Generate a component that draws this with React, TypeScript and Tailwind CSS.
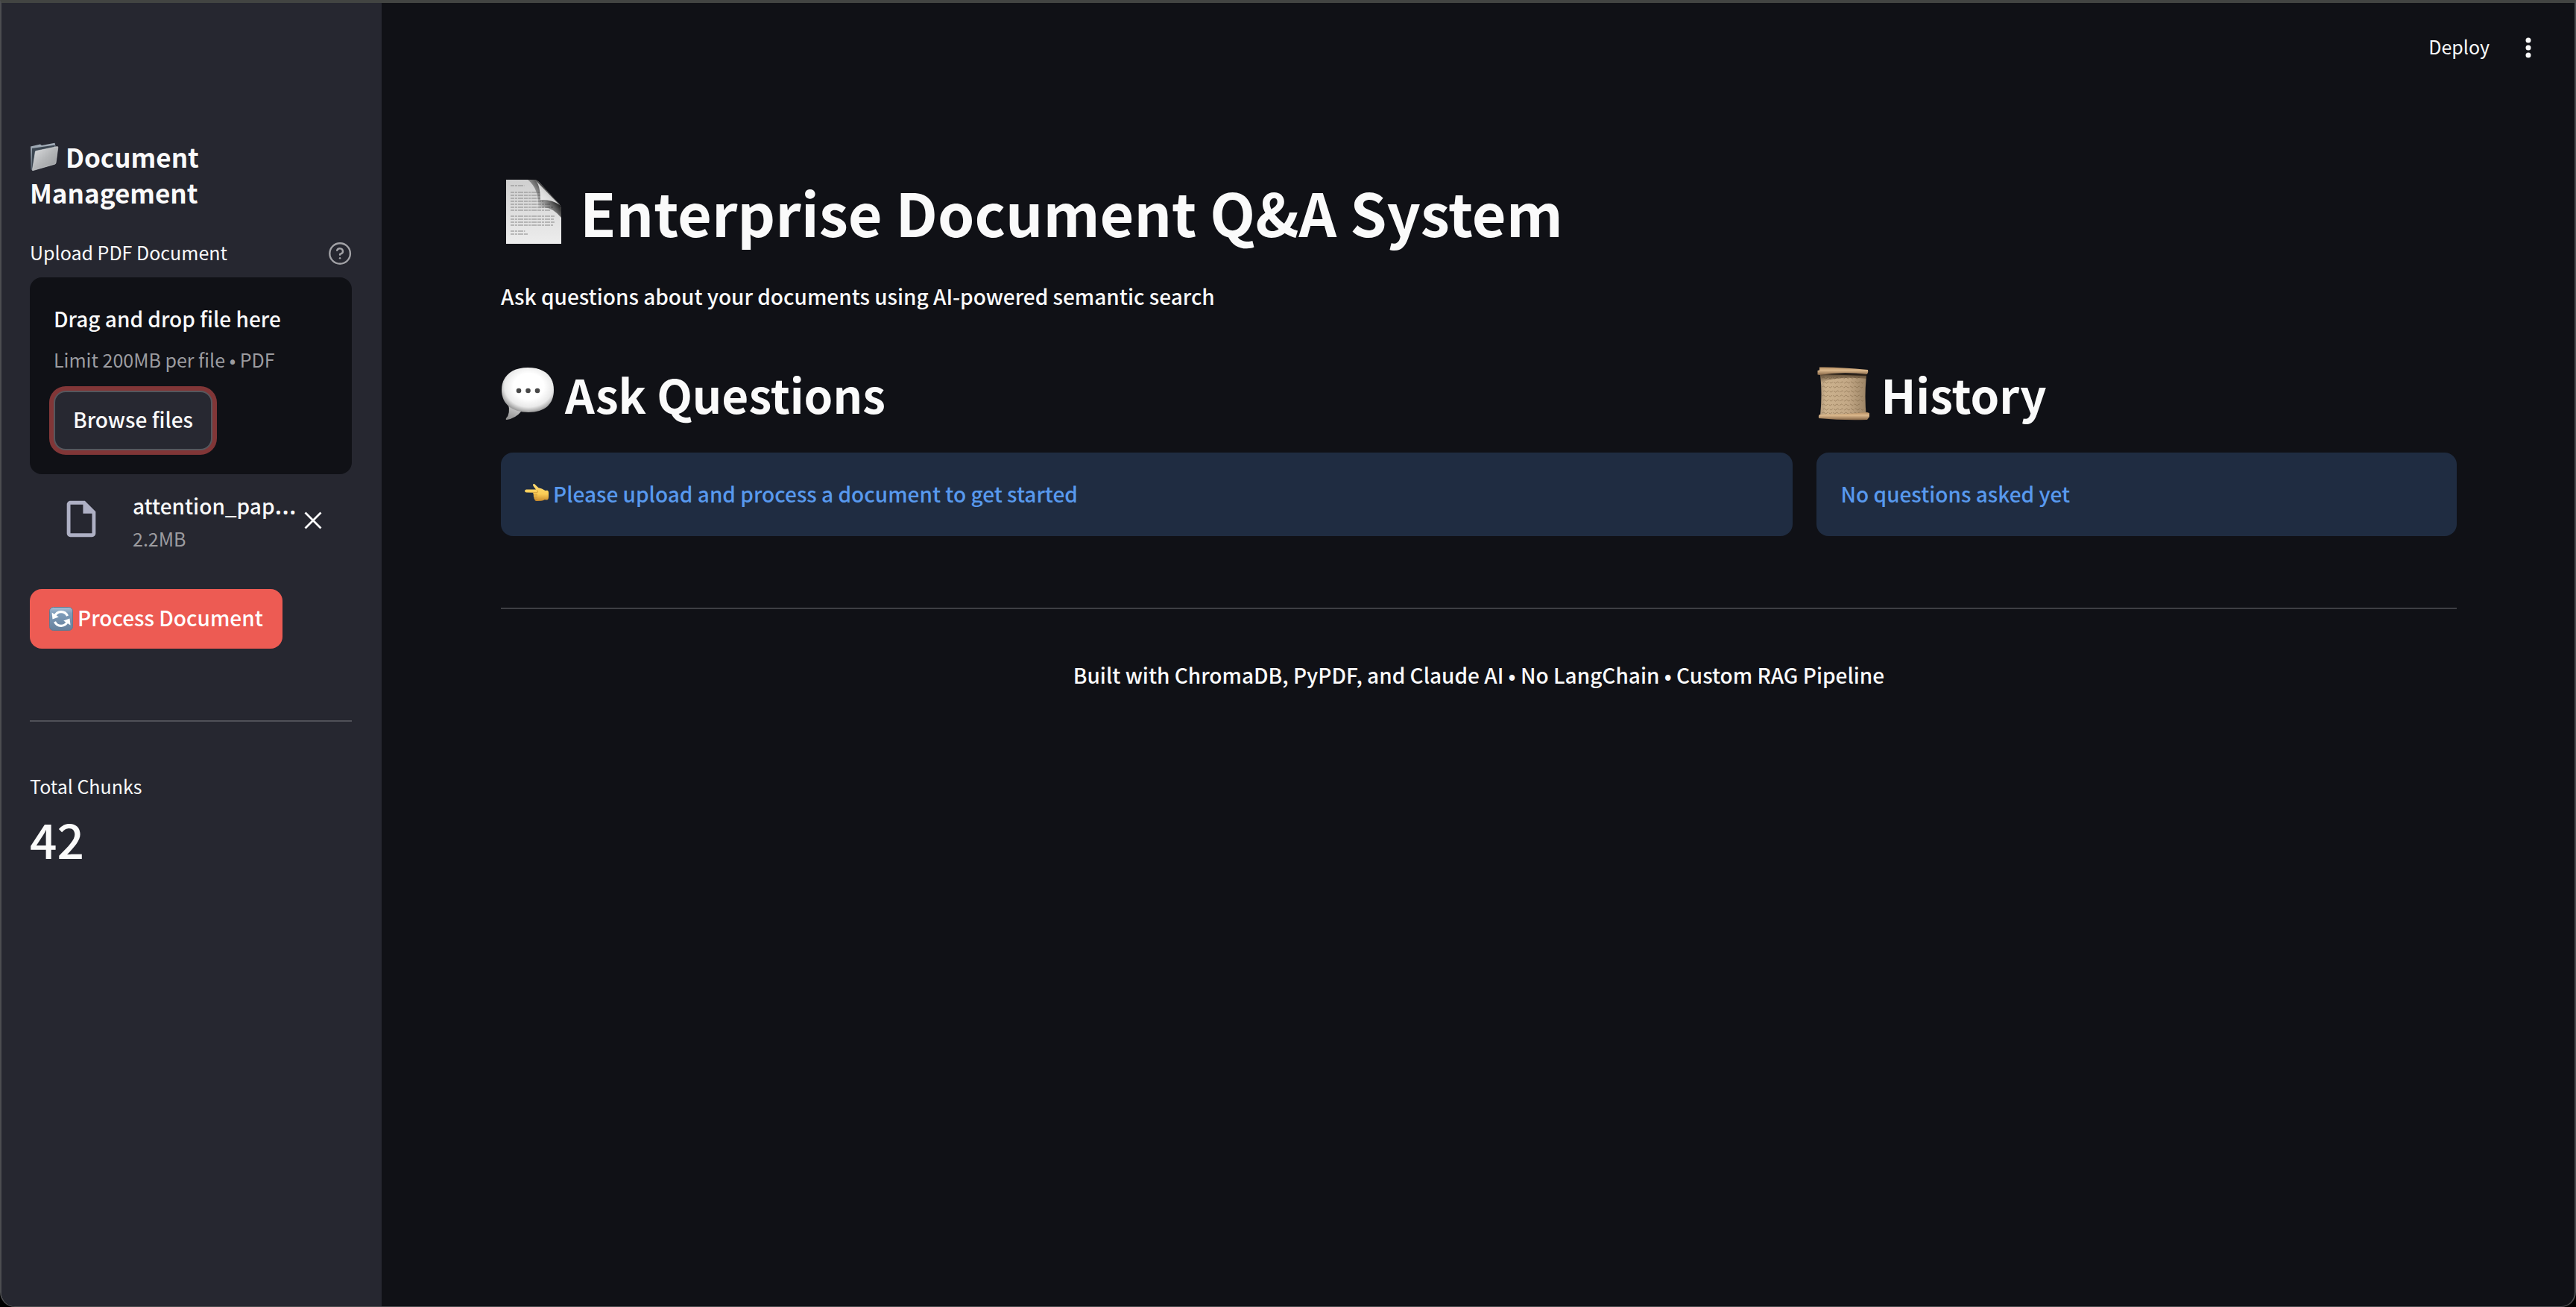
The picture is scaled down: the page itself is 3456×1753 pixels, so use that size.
import type { ReactNode } from 'react';

function FolderIcon() {
  return (
    <svg className="inline-block size-10 align-[-6px]" viewBox="0 0 40 40" aria-hidden="true">
      <defs>
        <linearGradient id="folderFront" x1="0" y1="0" x2="1" y2="1">
          <stop offset="0" stopColor="#e0e1e3" />
          <stop offset="0.5" stopColor="#b4b6b8" />
          <stop offset="1" stopColor="#95979a" />
        </linearGradient>
        <linearGradient id="folderBack" x1="0" y1="0" x2="0" y2="1">
          <stop offset="0" stopColor="#a9b3be" />
          <stop offset="1" stopColor="#525e6a" />
        </linearGradient>
      </defs>
      <path d="M1 5.500 L14 2.500 L16 4 L33.500 0.800 L34.500 5 L30 30 L3.500 38 L1.500 36 Z" fill="url(#folderBack)" />
      <path d="M3 8 L34 3.500 L33 7 L7 11.500 L4 37 L3 36 Z" fill="#3d4752" />
      <path d="M7.500 12.500 Q7.600 11.600 8.600 11.400 L36.500 5.600 Q38 5.400 37.800 7 L35 27.600 Q34.800 28.800 33.600 29.200 L4.600 37.600 Q3.200 38 3.400 36.600 Z" fill="url(#folderFront)" stroke="#d6d8da" strokeWidth="0.600" />
    </svg>
  );
}

const letterLines = [
  [10, 20], [19, 45], [23, 45], [27, 46], [31, 48], [35, 58], [39, 62], [43, 58],
  [51, 64], [55, 63], [59, 64], [63, 62], [71, 21], [75, 26],
];

function PageIcon() {
  return (
    <svg className="size-[88px] shrink-0" viewBox="0 0 88 88" aria-hidden="true">
      <defs>
        <linearGradient id="pageBody" x1="0" y1="0" x2="0" y2="1">
          <stop offset="0" stopColor="#cfcfcf" />
          <stop offset="0.5" stopColor="#dedede" />
          <stop offset="1" stopColor="#ededed" />
        </linearGradient>
        <linearGradient id="pageShade" x1="1" y1="0" x2="0" y2="0.8">
          <stop offset="0.35" stopColor="#000" stopOpacity="0.85" />
          <stop offset="0.62" stopColor="#222" stopOpacity="0.35" />
          <stop offset="0.8" stopColor="#222" stopOpacity="0" />
        </linearGradient>
        <linearGradient id="pageCurl" x1="0" y1="1" x2="0.7" y2="0.3">
          <stop offset="0" stopColor="#f6f6f6" />
          <stop offset="0.6" stopColor="#dcdcdc" />
          <stop offset="1" stopColor="#a8a8a8" />
        </linearGradient>
      </defs>
      <path d="M7 1 H44 Q49 1 53 6 L75 30 Q81 35 81 42 V87 H7 Z" fill="url(#pageBody)" />
      {letterLines.map(([y, w]) => (
        <line key={y} x1="13" x2={13 + w * 0.92} y1={y - 1} y2={y - 1} stroke="#8a8a8a" strokeOpacity="0.7" strokeWidth="1.400" strokeDasharray="5 1 3 1 7 1" />
      ))}
      <path d="M36 1 H44 Q49 1 53 6 L75 30 Q81 35 81 42 V52 Q66 34 50 40 Q52 14 36 1 Z" fill="url(#pageShade)" />
      <path d="M46 1.500 Q53 8 53 28 Q68 27 79 35 Z" fill="url(#pageCurl)" />
    </svg>
  );
}

function BubbleIcon() {
  return (
    <svg className="size-[72px] shrink-0" viewBox="0 0 72 72" aria-hidden="true">
      <defs>
        <radialGradient id="bubbleFill" cx="0.52" cy="0.42" r="0.58">
          <stop offset="0.5" stopColor="#ffffff" />
          <stop offset="0.8" stopColor="#e9e9e9" />
          <stop offset="1" stopColor="#9b9b9b" />
        </radialGradient>
        <linearGradient id="bubbleTail" x1="0.6" y1="0" x2="0.2" y2="1">
          <stop offset="0" stopColor="#d5d5d5" />
          <stop offset="1" stopColor="#8e8e8e" />
        </linearGradient>
      </defs>
      <path d="M10 50 Q13 63 7 69 Q6 71 8 71 Q20 69 28 59 Z" fill="url(#bubbleTail)" />
      <path d="M36 1 C58 1 71 12 71 31 C71 50 59 61 37 61 C15 61 1 50 1 31 C1 13 14 1 36 1 Z" fill="url(#bubbleFill)" />
      <circle cx="24" cy="32" r="3.300" fill="#484848" />
      <circle cx="36.500" cy="32" r="3.300" fill="#484848" />
      <circle cx="49" cy="32" r="3.300" fill="#484848" />
    </svg>
  );
}

function ScrollIcon() {
  return (
    <svg className="size-[72px] shrink-0" viewBox="0 0 72 72" aria-hidden="true">
      <defs>
        <linearGradient id="scrollSheet" x1="0" y1="0" x2="1" y2="0">
          <stop offset="0" stopColor="#b0987a" />
          <stop offset="0.12" stopColor="#ccb28e" />
          <stop offset="0.6" stopColor="#c3a886" />
          <stop offset="1" stopColor="#9c8465" />
        </linearGradient>
        <linearGradient id="scrollRoll" x1="0" y1="0" x2="0" y2="1">
          <stop offset="0" stopColor="#b58d61" />
          <stop offset="0.4" stopColor="#dcb98d" />
          <stop offset="1" stopColor="#866647" />
        </linearGradient>
        <linearGradient id="scrollShade" x1="0" y1="0" x2="0" y2="1">
          <stop offset="0" stopColor="#3d2c1a" stopOpacity="0.8" />
          <stop offset="1" stopColor="#3d2c1a" stopOpacity="0" />
        </linearGradient>
      </defs>
      <path d="M5 10 Q8 36 5 66 L67 68 Q64 40 67 12 Z" fill="url(#scrollSheet)" />
      {[15, 21, 27, 33, 39, 45, 51, 57, 62].map((y, i) => (
        <path key={y} d={`M${8 + (i % 2)} ${y} q1.500 -2 3 0 t3 0 t3 0 t3 0 t3 0 t3 0 t3 0 t3 0 t3 0 t3 0 t3 0 t3 0 t3 0 t3 0 t3 0 t3 0 t3 0 ${i % 3 ? 't3 0' : ''}`} fill="none" stroke="#6f5638" strokeOpacity="0.5" strokeWidth="0.900" strokeDasharray="9 1.500 5 1.500" />
      ))}
      <path d="M5 9 L67 10 L67 16 Q30 12 6 21 Z" fill="url(#scrollShade)" />
      <path d="M4 0.500 Q30 0 69 4 Q70 7 68 10 Q34 6 4 11 L1.500 10.500 L1.500 5 L4 4.500 Z" fill="url(#scrollRoll)" />
      <path d="M4 64 Q38 64 68 61 L71 62 L71 67 L68 71 Q34 72 3 69 Q2 66 4 64 Z" fill="url(#scrollRoll)" />
    </svg>
  );
}

function HandIcon() {
  return (
    <svg className="size-8 shrink-0" viewBox="0 0 32 32" aria-hidden="true">
      <defs>
        <linearGradient id="handFill" x1="0" y1="0" x2="0" y2="1">
          <stop offset="0" stopColor="#ffdc72" />
          <stop offset="0.6" stopColor="#f9cb55" />
          <stop offset="1" stopColor="#c98a2c" />
        </linearGradient>
      </defs>
      <path d="M2 10.500 Q0 11 0 12.800 Q0.300 14.600 2.200 14.600 L11.500 14.800 Q10.800 16.500 12 17.800 Q11.200 19.400 12.400 20.700 Q11.900 22.400 13.200 23.300 Q13.200 26 16 26 L22 25.800 Q25 25.600 26.500 24.200 L30 24.600 Q32 24 32 20 V15 Q32 12 30 11.800 L27.500 12 Q23 9 18.500 8.200 Q15.500 5.500 13.200 3.200 Q11.500 2.500 11 4 Q10.800 5.500 13 8 L15 10.500 Z" fill="url(#handFill)" />
      <path d="M11.500 14.800 L16.500 14.900 Q18.500 13.500 16.500 11.500 M12 17.900 H17 M12.400 20.800 H17 M13.300 23.400 H17" fill="none" stroke="#c0862c" strokeWidth="0.800" />
    </svg>
  );
}

function RefreshIcon() {
  return (
    <svg className="size-8 shrink-0" viewBox="0 0 32 32" aria-hidden="true">
      <defs>
        <linearGradient id="refreshTile" x1="0" y1="0" x2="0" y2="1">
          <stop offset="0" stopColor="#a9bfd4" />
          <stop offset="0.25" stopColor="#7f9dbb" />
          <stop offset="1" stopColor="#66809c" />
        </linearGradient>
      </defs>
      <rect x="0.500" y="0.500" width="31" height="31" rx="5" fill="url(#refreshTile)" stroke="#64798f" />
      <path d="M7.500 12.500 A9.200 9.200 0 0 1 24.500 12.200" fill="none" stroke="#fff" strokeWidth="3.200" />
      <path d="M24.500 19.500 A9.200 9.200 0 0 1 7.500 19.800" fill="none" stroke="#fff" strokeWidth="3.200" />
      <path d="M3.500 7.500 L4.500 16.500 L12.800 13.600 Z" fill="#fff" />
      <path d="M28.500 24.500 L27.500 15.500 L19.200 18.400 Z" fill="#fff" />
    </svg>
  );
}

function Alert({ children }: { children: ReactNode }) {
  return (
    <div role="status" className="mt-9 flex h-28 items-center gap-1.5 rounded-2xl bg-[#1f2c41] px-8 pb-0.5 text-[28px] leading-[48px] font-medium text-[#5899ee]">
      {children}
    </div>
  );
}

function Sidebar() {
  return (
    <aside className="w-[510px] shrink-0 bg-[#262730] pt-[182px] pr-10 pl-[38px]">
      <h2 className="text-[35px] leading-[48px] font-bold">
        <FolderIcon /> Document Management
      </h2>

      <div className="mt-9 flex h-10 items-end justify-between">
        <label htmlFor="pdf" className="text-[25px] leading-10">Upload PDF Document</label>
        <button type="button" aria-label="Help" className="text-[#a2a2a6]">
          <svg className="size-9" viewBox="0 0 24 24" fill="none" stroke="currentColor" strokeWidth="1.600" strokeLinecap="round" strokeLinejoin="round">
            <circle cx="13.400" cy="12" r="9.200" />
            <path d="M10.800 9.200 a2.700 2.700 0 0 1 5.200 0.900 c0 1.800 -2.600 2.500 -2.600 2.500 v0.500" />
            <path d="M13.400 16.200 h0.010" />
          </svg>
        </button>
      </div>

      <section className="mt-3.5 rounded-2xl bg-[#101116] p-8">
        <p className="text-[28px] leading-[46px] font-medium">Drag and drop file here</p>
        <p className="mt-3 text-[25px] leading-10 text-[#9c9ca0]">Limit 200MB per file • PDF</p>
        <button id="pdf" type="button" className="mt-[22px] block h-20 rounded-2xl border-2 border-[#56575d] bg-[#272831] px-6 pb-1 text-[28px] font-medium ring-6 ring-[#813637]">
          Browse files
        </button>
      </section>

      <div className="mt-[22px] flex items-center justify-between pr-10 pl-10">
        <svg className="mb-2 size-[58px] shrink-0 fill-[#aeb0c4]" viewBox="0 0 24 24" aria-hidden="true">
          <path d="M6 2c-1.100 0-1.990.9-1.990 2L4 20c0 1.100.89 2 1.990 2H18c1.100 0 2-.9 2-2V8l-6-6H6zm0 2h7v5h5v11H6V4z" />
        </svg>
        <div className="ml-10 grow">
          <p className="h-10 text-[28px] leading-10 font-medium whitespace-nowrap">
            attention_pap<span className="font-['Noto_Sans'] text-[36px] leading-none">…</span>
          </p>
          <p className="mt-1 text-[25px] leading-10 text-[#9c9ca0]">2.2MB</p>
        </div>
        <button type="button" aria-label="Remove file" className="mb-1 shrink-0">
          <svg className="size-6" viewBox="0 0 24 24" fill="none" stroke="currentColor" strokeWidth="2.800">
            <path d="M1.500 1.500 L22.500 22.500 M22.500 1.500 L1.500 22.500" />
          </svg>
        </button>
      </div>

      <button type="button" className="mt-12 flex h-20 items-center gap-1.5 rounded-2xl bg-[#ed5b53] px-[26px] text-[28px] font-medium text-white">
        <RefreshIcon />
        <span className="pb-1">Process Document</span>
      </button>

      <hr className="mt-24 border-t-2 border-[#505158]" />

      <p className="mt-[66px] text-[25px] leading-10">Total Chunks</p>
      <p className="mt-3.5 text-[64px] leading-[72px] font-medium">42</p>
    </aside>
  );
}

export default function App() {
  return (
    <div className="bg-black font-['Noto_Sans_CJK_JP',sans-serif] text-[#fafafa]">
      <div className="flex min-h-screen overflow-hidden rounded-b-[20px] border-x-2 border-t-4 border-b border-[#4c4d50] border-t-[#424442] bg-[#101116]">
        <Sidebar />
        <div className="min-w-0 grow">
          <header className="flex h-[116px] items-center justify-end gap-10 pr-[50px]">
            <button type="button" className="text-[25px] leading-10">Deploy</button>
            <button type="button" aria-label="Menu">
              <svg className="h-10 w-6 fill-current" viewBox="0 0 24 40">
                <circle cx="12" cy="12" r="3.500" />
                <circle cx="12" cy="22" r="3.500" />
                <circle cx="12" cy="32" r="3.500" />
              </svg>
            </button>
          </header>
          <main className="pt-[111px] pr-[158px] pl-40">
            <h1 className="flex items-center gap-[18px] text-[79px] leading-[106px] font-bold">
              <PageIcon />
              Enterprise Document Q&amp;A System
            </h1>
            <p className="mt-9 text-[28px] leading-[48px] font-medium">
              Ask questions about your documents using AI-powered semantic search
            </p>
            <div className="mt-16 flex gap-8">
              <section className="grow basis-[calc(66.67%-32px)]">
                <h2 className="flex items-center gap-3.5 text-[62px] leading-[86px] font-bold">
                  <BubbleIcon />
                  Ask Questions
                </h2>
                <Alert>
                  <HandIcon />
                  Please upload and process a document to get started
                </Alert>
              </section>
              <section className="grow basis-[calc(33.33%-32px)]">
                <h2 className="flex items-center gap-3.5 text-[62px] leading-[86px] font-bold">
                  <ScrollIcon />
                  History
                </h2>
                <Alert>No questions asked yet</Alert>
              </section>
            </div>
            <hr className="mt-24 border-t-2 border-[#3e3f44]" />
            <footer className="mt-16 text-center text-[28px] leading-[48px] font-medium">
              Built with ChromaDB, PyPDF, and Claude AI • No LangChain • Custom RAG Pipeline
            </footer>
          </main>
        </div>
      </div>
    </div>
  );
}
